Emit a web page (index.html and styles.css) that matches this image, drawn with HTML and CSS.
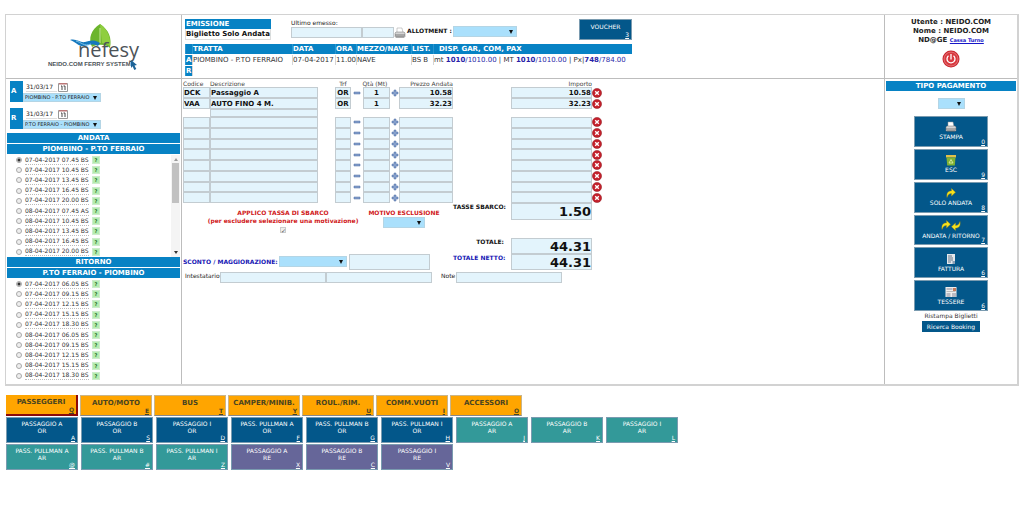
FILE: index.html
```html
<!DOCTYPE html>
<html lang="it">
<head>
<meta charset="utf-8">
<title>Nefesy - Emissione</title>
<link rel="stylesheet" href="styles.css">
</head>
<body>
<svg class="defs" aria-hidden="true">
  <symbol id="printer" viewBox="0 0 12 12"><path d="M3 1h5l1 5H3z" fill="#fff" stroke="#999" stroke-width=".5"/><path d="M1 6l1-1h8l1 1v4H1z" fill="#d4d4d4" stroke="#777" stroke-width=".5"/><path d="M1 8h10M2 10h8" stroke="#666" stroke-width=".8"/></symbol>
  <symbol id="del" viewBox="0 0 10 10"><circle cx="5" cy="5" r="4.6" fill="#c4202b" stroke="#8e1a20" stroke-width=".5"/><path d="M3.2 3.2l3.6 3.6M6.8 3.2L3.2 6.8" stroke="#fff" stroke-width="1.4"/></symbol>
  <symbol id="minus" viewBox="0 0 8 8"><path d="M1 3h6v2H1z" fill="#86a0cc" stroke="#4a68a0" stroke-width=".5"/></symbol>
  <symbol id="plus" viewBox="0 0 8 8"><path d="M3 1h2v2h2v2H5v2H3V5H1V3h2z" fill="#86a0cc" stroke="#4a68a0" stroke-width=".5"/></symbol>
  <symbol id="cal" viewBox="0 0 10 10"><path d="M.5 1.5h9v8h-9z" fill="#fff" stroke="#999"/><path d="M1 1h8v1.5H1z" fill="#b77"/><path d="M3 4h1v4M5.500 4h1.500v4" fill="none" stroke="#333" stroke-width=".9"/></symbol>
  <symbol id="arrow" viewBox="0 0 10 10"><path d="M1 9.500C.3 5 2 2.800 5.500 3V.5L9.500 4.300 5.500 8V5.500C3.500 5.300 2 6.500 1 9.500z" fill="#f7e21d" stroke="#a38b10" stroke-width=".4"/></symbol>
</svg>

<main class="shell">
  <header class="cell logo">
    <svg class="logo-art" viewBox="0 0 100 50" role="img" aria-label="nefesy">
      <path d="M54 1C45 7 42 15 46 24c5-3 14-3 18 1 2-10-1-18-10-24z" fill="#6cb52d"/>
      <path d="M54 1c8 6 11 14 10 22-3-2-6-3-8-3z" fill="#8fce3f"/>
      <path d="M54 5v15" stroke="#c9e89a" stroke-width="1"/>
      <path d="M24 17c6-2 10 3 15 2s8-3 15 1l-2 3c-6-3-9-1-14 0s-8-4-14-6z" fill="#1678bd"/>
      <path d="M30 18c5 1 8 6 15 3" fill="none" stroke="#7fc4ea" stroke-width="1"/>
      <text class="brand" x="32" y="34">nefesy</text>
      <text class="tagline" x="2" y="43">NEIDO.COM FERRY SYSTEM</text>
      <path d="M85 37l6 5-2.500.4 1.800 3.600-2 1-1.700-3.700-1.600 1.800z" fill="#1c6397"/>
    </svg>
  </header>

  <section class="cell booking">
    <div class="booking-bar">
      <div class="mode"><h1 class="bar">EMISSIONE</h1><strong class="mode-name">Biglietto Solo Andata</strong></div>
      <div class="last"><label class="small" for="last1">Ultimo emesso:</label>
        <div class="last-row"><input class="f last-a" id="last1"><input class="f last-b" aria-label="Numero emesso"></div></div>
      <button class="plain" aria-label="Stampa ultimo"><svg class="i12"><use href="#printer"/></svg></button>
      <label class="allot" for="allot">ALLOTMENT :</label>
      <span class="sel sel-allot"><select id="allot"><option></option></select></span>
      <button class="tile voucher">VOUCHER<u>3</u></button>
    </div>
    <table class="route">
      <thead><tr><th class="c-dir"></th><th class="c-tratta">TRATTA</th><th class="c-data">DATA</th><th class="c-ora">ORA</th><th class="c-nave">MEZZO/NAVE</th><th class="c-list">LIST.</th><th class="disp">DISP. GAR, COM, PAX</th></tr></thead>
      <tbody>
        <tr><th>A</th><td>PIOMBINO - P.TO FERRAIO</td><td>07-04-2017</td><td>11.00</td><td>NAVE</td><td>BS B</td><td class="avail">mt <span><b>1010</b>/1010.00</span> | MT <span><b>1010</b>/1010.00</span> | Px|<span><b>748</b>/784.00</span></td></tr>
        <tr><th>R</th><td colspan="6"></td></tr>
      </tbody>
    </table>
  </section>

  <aside class="cell user">
    <strong>Utente : NEIDO.COM</strong>
    <strong>Nome : NEIDO.COM</strong>
    <strong>ND@GE <a class="cassa" href="#">Cassa Turno</a></strong>
    <button class="plain power" aria-label="Esci"><svg class="i18" viewBox="0 0 18 18"><circle cx="9" cy="9" r="8.500" fill="#c9222b"/><circle cx="9" cy="9" r="7" fill="#d8393f" stroke="#f0a5a5" stroke-width=".6"/><path d="M6.500 5.800a4 4 0 1 0 5 0M9 4v5.500" fill="none" stroke="#fff" stroke-width="1.300"/></svg></button>
  </aside>

  <section class="cell trips">
    <div class="legs">
    <div class="leg"><b class="leg-tag">A</b><div class="leg-body">
      <div class="leg-date"><input class="date" aria-label="Data andata" value="31/03/17"><button class="plain" aria-label="Calendario andata"><svg class="i10"><use href="#cal"/></svg></button></div>
      <span class="sel sel-leg"><select aria-label="Tratta andata"><option>PIOMBINO - P.TO FERRAIO</option></select></span></div></div>
    <div class="leg"><b class="leg-tag">R</b><div class="leg-body">
      <div class="leg-date"><input class="date" aria-label="Data ritorno" value="31/03/17"><button class="plain" aria-label="Calendario ritorno"><svg class="i10"><use href="#cal"/></svg></button></div>
      <span class="sel sel-leg"><select aria-label="Tratta ritorno"><option>P.TO FERRAIO - PIOMBINO</option></select></span></div></div>
    </div>

    <h2 class="bar center">ANDATA</h2>
    <h3 class="bar center">PIOMBINO - P.TO FERRAIO</h3>
    <div class="scroll">
      <div class="times">
        <div class="time"><label><input type="radio" name="out" checked><span>07-04-2017 07.45 BS</span></label><button class="q">?</button></div>
        <div class="time"><label><input type="radio" name="out"><span>07-04-2017 10.45 BS</span></label><button class="q">?</button></div>
        <div class="time"><label><input type="radio" name="out"><span>07-04-2017 13.45 BS</span></label><button class="q">?</button></div>
        <div class="time"><label><input type="radio" name="out"><span>07-04-2017 16.45 BS</span></label><button class="q">?</button></div>
        <div class="time"><label><input type="radio" name="out"><span>07-04-2017 20.00 BS</span></label><button class="q">?</button></div>
        <div class="time"><label><input type="radio" name="out"><span>08-04-2017 07.45 AS</span></label><button class="q">?</button></div>
        <div class="time"><label><input type="radio" name="out"><span>08-04-2017 10.45 BS</span></label><button class="q">?</button></div>
        <div class="time"><label><input type="radio" name="out"><span>08-04-2017 13.45 BS</span></label><button class="q">?</button></div>
        <div class="time"><label><input type="radio" name="out"><span>08-04-2017 16.45 BS</span></label><button class="q">?</button></div>
        <div class="time"><label><input type="radio" name="out"><span>08-04-2017 20.00 BS</span></label><button class="q">?</button></div>
      </div>
      <div class="track"><i class="up"></i><i class="thumb"></i><i class="down"></i></div>
    </div>
    <h2 class="bar center">RITORNO</h2>
    <h3 class="bar center">P.TO FERRAIO - PIOMBINO</h3>
    <div class="times">
      <div class="time"><label><input type="radio" name="back" checked><span>07-04-2017 06.05 BS</span></label><button class="q">?</button></div>
      <div class="time"><label><input type="radio" name="back"><span>07-04-2017 09.15 BS</span></label><button class="q">?</button></div>
      <div class="time"><label><input type="radio" name="back"><span>07-04-2017 12.15 BS</span></label><button class="q">?</button></div>
      <div class="time"><label><input type="radio" name="back"><span>07-04-2017 15.15 BS</span></label><button class="q">?</button></div>
      <div class="time"><label><input type="radio" name="back"><span>07-04-2017 18.30 BS</span></label><button class="q">?</button></div>
      <div class="time"><label><input type="radio" name="back"><span>08-04-2017 06.05 BS</span></label><button class="q">?</button></div>
      <div class="time"><label><input type="radio" name="back"><span>08-04-2017 09.15 BS</span></label><button class="q">?</button></div>
      <div class="time"><label><input type="radio" name="back"><span>08-04-2017 12.15 BS</span></label><button class="q">?</button></div>
      <div class="time"><label><input type="radio" name="back"><span>08-04-2017 15.15 BS</span></label><button class="q">?</button></div>
      <div class="time"><label><input type="radio" name="back"><span>08-04-2017 18.30 BS</span></label><button class="q">?</button></div>
    </div>
  </section>

  <section class="cell items">
    <table class="lines">
      <thead><tr class="line"><th>Codice</th><th>Descrizione</th><th></th><th class="ctr">Trf</th><th class="ctr wide">Qtà (Mt)</th><th class="num">Prezzo Andata</th><th></th><th class="num">Importo</th><th></th></tr></thead>
      <tbody class="filled">
        <tr class="line"><td><input class="f" aria-label="Codice" value="DCK"></td><td><input class="f" aria-label="Descrizione" value="Passaggio A"></td><td></td><td><input class="f ctr" aria-label="Trf" value="OR"></td><td><button class="plain" aria-label="Meno"><svg class="i8"><use href="#minus"/></svg></button></td><td><input class="f ctr" aria-label="Qtà" value="1"></td><td><button class="plain" aria-label="Più"><svg class="i8"><use href="#plus"/></svg></button></td><td><input class="f num" aria-label="Prezzo" value="10.58"></td><td></td><td><input class="f num" aria-label="Importo" value="10.58"></td><td><button class="plain" aria-label="Elimina"><svg class="i10"><use href="#del"/></svg></button></td></tr>
        <tr class="line"><td><input class="f" aria-label="Codice" value="VAA"></td><td><input class="f" aria-label="Descrizione" value="AUTO FINO 4 M."></td><td></td><td><input class="f ctr" aria-label="Trf" value="OR"></td><td></td><td><input class="f ctr" aria-label="Qtà" value="1"></td><td></td><td><input class="f num" aria-label="Prezzo" value="32.23"></td><td></td><td><input class="f num" aria-label="Importo" value="32.23"></td><td><button class="plain" aria-label="Elimina"><svg class="i10"><use href="#del"/></svg></button></td></tr>
        <tr class="line extra"><td></td><td><input class="f" aria-label="Targa"></td></tr>
      </tbody>
      <tbody class="empty">
        <tr class="line"><td><input class="f" aria-label="Codice"></td><td><input class="f" aria-label="Descrizione"></td><td></td><td><input class="f" aria-label="Trf"></td><td><button class="plain" aria-label="Meno"><svg class="i8"><use href="#minus"/></svg></button></td><td><input class="f" aria-label="Qtà"></td><td><button class="plain" aria-label="Più"><svg class="i8"><use href="#plus"/></svg></button></td><td><input class="f" aria-label="Prezzo"></td><td></td><td><input class="f" aria-label="Importo"></td><td><button class="plain" aria-label="Elimina"><svg class="i10"><use href="#del"/></svg></button></td></tr>
        <tr class="line"><td><input class="f" aria-label="Codice"></td><td><input class="f" aria-label="Descrizione"></td><td></td><td><input class="f" aria-label="Trf"></td><td><button class="plain" aria-label="Meno"><svg class="i8"><use href="#minus"/></svg></button></td><td><input class="f" aria-label="Qtà"></td><td><button class="plain" aria-label="Più"><svg class="i8"><use href="#plus"/></svg></button></td><td><input class="f" aria-label="Prezzo"></td><td></td><td><input class="f" aria-label="Importo"></td><td><button class="plain" aria-label="Elimina"><svg class="i10"><use href="#del"/></svg></button></td></tr>
        <tr class="line"><td><input class="f" aria-label="Codice"></td><td><input class="f" aria-label="Descrizione"></td><td></td><td><input class="f" aria-label="Trf"></td><td><button class="plain" aria-label="Meno"><svg class="i8"><use href="#minus"/></svg></button></td><td><input class="f" aria-label="Qtà"></td><td><button class="plain" aria-label="Più"><svg class="i8"><use href="#plus"/></svg></button></td><td><input class="f" aria-label="Prezzo"></td><td></td><td><input class="f" aria-label="Importo"></td><td><button class="plain" aria-label="Elimina"><svg class="i10"><use href="#del"/></svg></button></td></tr>
        <tr class="line"><td><input class="f" aria-label="Codice"></td><td><input class="f" aria-label="Descrizione"></td><td></td><td><input class="f" aria-label="Trf"></td><td><button class="plain" aria-label="Meno"><svg class="i8"><use href="#minus"/></svg></button></td><td><input class="f" aria-label="Qtà"></td><td><button class="plain" aria-label="Più"><svg class="i8"><use href="#plus"/></svg></button></td><td><input class="f" aria-label="Prezzo"></td><td></td><td><input class="f" aria-label="Importo"></td><td><button class="plain" aria-label="Elimina"><svg class="i10"><use href="#del"/></svg></button></td></tr>
        <tr class="line"><td><input class="f" aria-label="Codice"></td><td><input class="f" aria-label="Descrizione"></td><td></td><td><input class="f" aria-label="Trf"></td><td><button class="plain" aria-label="Meno"><svg class="i8"><use href="#minus"/></svg></button></td><td><input class="f" aria-label="Qtà"></td><td><button class="plain" aria-label="Più"><svg class="i8"><use href="#plus"/></svg></button></td><td><input class="f" aria-label="Prezzo"></td><td></td><td><input class="f" aria-label="Importo"></td><td><button class="plain" aria-label="Elimina"><svg class="i10"><use href="#del"/></svg></button></td></tr>
        <tr class="line"><td><input class="f" aria-label="Codice"></td><td><input class="f" aria-label="Descrizione"></td><td></td><td><input class="f" aria-label="Trf"></td><td><button class="plain" aria-label="Meno"><svg class="i8"><use href="#minus"/></svg></button></td><td><input class="f" aria-label="Qtà"></td><td><button class="plain" aria-label="Più"><svg class="i8"><use href="#plus"/></svg></button></td><td><input class="f" aria-label="Prezzo"></td><td></td><td><input class="f" aria-label="Importo"></td><td><button class="plain" aria-label="Elimina"><svg class="i10"><use href="#del"/></svg></button></td></tr>
        <tr class="line"><td><input class="f" aria-label="Codice"></td><td><input class="f" aria-label="Descrizione"></td><td></td><td><input class="f" aria-label="Trf"></td><td><button class="plain" aria-label="Meno"><svg class="i8"><use href="#minus"/></svg></button></td><td><input class="f" aria-label="Qtà"></td><td><button class="plain" aria-label="Più"><svg class="i8"><use href="#plus"/></svg></button></td><td><input class="f" aria-label="Prezzo"></td><td></td><td><input class="f" aria-label="Importo"></td><td><button class="plain" aria-label="Elimina"><svg class="i10"><use href="#del"/></svg></button></td></tr>
        <tr class="line"><td><input class="f" aria-label="Codice"></td><td><input class="f" aria-label="Descrizione"></td><td></td><td><input class="f" aria-label="Trf"></td><td><button class="plain" aria-label="Meno"><svg class="i8"><use href="#minus"/></svg></button></td><td><input class="f" aria-label="Qtà"></td><td><button class="plain" aria-label="Più"><svg class="i8"><use href="#plus"/></svg></button></td><td><input class="f" aria-label="Prezzo"></td><td></td><td><input class="f" aria-label="Importo"></td><td><button class="plain" aria-label="Elimina"><svg class="i10"><use href="#del"/></svg></button></td></tr>
      </tbody>
    </table>

    <div class="sums taxes">
      <div class="tax"><label for="tax">APPLICO TASSA DI SBARCO<br>(per escludere selezionare una motivazione)</label><input type="checkbox" id="tax" checked disabled></div>
      <div class="tax"><label for="motivo">MOTIVO ESCLUSIONE</label><span class="sel sel-mot"><select id="motivo"><option></option></select></span></div>
      <label class="sum-label" for="sbarco">TASSE SBARCO:</label><input class="f big" id="sbarco" value="1.50">
    </div>
    <div class="sums totals">
      <div class="discount"><label for="sconto">SCONTO / MAGGIORAZIONE:</label><span class="sel sel-sconto"><select id="sconto"><option></option></select></span><input class="f disc-val" aria-label="Valore sconto"></div>
      <label class="sum-label" for="tot">TOTALE:</label><input class="f big" id="tot" value="44.31">
      <label class="sum-label net" for="netto">TOTALE NETTO:</label><input class="f big" id="netto" value="44.31">
    </div>
    <div class="holder">
      <label class="small" for="int">Intestatario</label><input class="f" id="int"><input class="f" aria-label="Nome"><label class="small note" for="note">Note</label><input class="f" id="note">
    </div>
  </section>

  <aside class="cell pay">
    <h2 class="bar center">TIPO PAGAMENTO</h2>
    <span class="sel sel-pay"><select aria-label="Tipo pagamento"><option></option></select></span>
    <div class="actions">
      <button class="tile"><svg class="i12"><use href="#printer"/></svg>STAMPA<u>0</u></button>
      <button class="tile"><svg class="i12" viewBox="0 0 12 12"><path d="M1 1h10v2.500H1z" fill="#e2c04a"/><path d="M1.500 3.500h9l-.7 8H2.200z" fill="#7fb234"/><path d="M4 9l2-3.500L8 9z" fill="none" stroke="#e3f3b5" stroke-width=".8"/></svg>ESC<u>9</u></button>
      <button class="tile"><svg class="i12"><use href="#arrow" x="1" y="1" width="10" height="10"/></svg>SOLO ANDATA<u>8</u></button>
      <button class="tile"><svg class="pair" viewBox="0 0 20 12"><use href="#arrow" width="10" height="10" x="0" y="0"/><use href="#arrow" width="10" height="10" transform="rotate(180 10 5.500)"/></svg>ANDATA / RITORNO<u>7</u></button>
      <button class="tile"><svg class="i12" viewBox="0 0 12 12"><path d="M2 1h8v10H2z" fill="#e4e8ec"/><path d="M3 3h4M3 5h5M3 7h5M3 9h3" stroke="#66788a"/><path d="M7.500 8h2.500v3H7.500z" fill="#8ba0b5"/></svg>FATTURA<u>6</u></button>
      <button class="tile"><svg class="i12" viewBox="0 0 12 12"><path d="M.5 1h11v10H.5z" fill="#eee"/><path d="M1.500 3h6M1.500 8h4M1.500 10h4M7 8h4M7 10h4" stroke="#889"/><path d="M8 2h3v3H8z" fill="#c67a5c"/><path d="M1.500 5.500h9" stroke="#bbb"/></svg>TESSERE<u>6</u></button>
    </div>
    <a class="reprint" href="#">Ristampa Biglietti</a>
    <button class="search">Ricerca Booking</button>
  </aside>
</main>

<nav class="tabs">
  <button class="tab on">PASSEGGERI<u>Q</u></button>
  <button class="tab">AUTO/MOTO<u>E</u></button>
  <button class="tab">BUS<u>T</u></button>
  <button class="tab">CAMPER/MINIB.<u>Y</u></button>
  <button class="tab">ROUL./RIM.<u>U</u></button>
  <button class="tab">COMM.VUOTI<u>I</u></button>
  <button class="tab">ACCESSORI<u>O</u></button>
</nav>
<section class="fares">
  <button class="tile fare">PASSAGGIO A<br>OR<u>A</u></button>
  <button class="tile fare">PASSAGGIO B<br>OR<u>S</u></button>
  <button class="tile fare">PASSAGGIO I<br>OR<u>D</u></button>
  <button class="tile fare">PASS. PULLMAN A<br>OR<u>F</u></button>
  <button class="tile fare">PASS. PULLMAN B<br>OR<u>G</u></button>
  <button class="tile fare">PASS. PULLMAN I<br>OR<u>H</u></button>
  <button class="tile fare ar">PASSAGGIO A<br>AR<u>J</u></button>
  <button class="tile fare ar">PASSAGGIO B<br>AR<u>K</u></button>
  <button class="tile fare ar">PASSAGGIO I<br>AR<u>L</u></button>
  <button class="tile fare ar">PASS. PULLMAN A<br>AR<u>@</u></button>
  <button class="tile fare ar">PASS. PULLMAN B<br>AR<u>#</u></button>
  <button class="tile fare ar">PASS. PULLMAN I<br>AR<u>Z</u></button>
  <button class="tile fare re">PASSAGGIO A<br>RE<u>X</u></button>
  <button class="tile fare re">PASSAGGIO B<br>RE<u>C</u></button>
  <button class="tile fare re">PASSAGGIO I<br>RE<u>V</u></button>
</section>
</body>
</html>
```
FILE: styles.css
```css
* { box-sizing: border-box; }
body { margin: 0; padding: 14px 5px 0; background: #fff; color: #222; font: 6px/8px "DejaVu Sans", Verdana, sans-serif; }
button, input, select { font: inherit; color: inherit; margin: 0; padding: 0; border-radius: 0; }
button { cursor: pointer; }
h1, h2, h3 { margin: 0; }
svg { display: block; flex: none; }
.defs { position: absolute; width: 0; height: 0; }
.i8 { width: 8px; height: 8px; }
.i10 { width: 10px; height: 10px; }
.i12 { width: 12px; height: 12px; }
.i18 { width: 18px; height: 18px; }
.pair { width: 20px; height: 12px; }
.plain { display: block; border: 0; background: none; }
.bar { background: #0782c4; color: #fff; font-size: 7px; line-height: 10px; font-weight: bold; padding: 0 1px; }
.center { text-align: center; }
.small { font-size: 6px; line-height: 7px; }

/* Frame */
.shell { display: grid; grid-template-columns: 175px 1fr 132px; grid-template-rows: auto 1fr; border: 2px solid #d2d2d2; border-left-width: 1px; border-top-width: 1px; }
.cell { border: 0 solid #bdbdbd; min-width: 0; }
.logo, .booking, .user { border-bottom-width: 1px; }
.booking, .items { border-left-width: 1px; border-right-width: 1px; }

/* Logo */
.logo { display: flex; justify-content: center; padding: 8px 0 4px; }
.logo-art { width: 100px; height: 50px; margin-left: 4px; }
.brand { font: 20px "Open Sans", sans-serif; fill: #4c5358; }
.tagline { font: bold 6px "Liberation Sans", sans-serif; fill: #4c5358; }

/* Form fields */
.f { display: block; width: 100%; min-width: 0; height: 100%; border: 1px solid #c3ccd1; background: #e3f4fc; font-size: 7px; font-weight: bold; color: #111; }
.num { text-align: right; }
.ctr { text-align: center; }
.sel { display: block; position: relative; background: #aae0fc; border: 1px solid #b4d5e5; }
.sel::after { content: ""; position: absolute; right: 3px; top: 50%; margin-top: -2px; border: 2px solid transparent; border-top: 4px solid #111; border-bottom: 0; pointer-events: none; }
.sel select { display: block; width: 100%; height: 100%; appearance: none; border: 0; background: none; }

/* Booking header */
.booking { padding: 4px 3px 1px; }
.booking-bar { display: flex; width: 447px; max-width: 100%; height: 21px; }
.mode { width: 86px; margin-right: 20px; }
.mode-name { display: block; font-size: 7px; line-height: 10px; border: 1px solid #ddd; border-top: 0; white-space: nowrap; color: #111; }
.last { width: 103px; }
.last-row { display: flex; height: 11px; }
.last-a { width: 71px; }
.last-b { width: 32px; }
.booking-bar > .plain, .allot { margin-top: 7px; }
.allot { font-weight: bold; margin-left: 1px; padding-top: 1px; width: 46px; white-space: nowrap; color: #111; }
.sel-allot { width: 64px; height: 11px; margin-top: 7px; }
.route { width: 447px; max-width: 100%; margin-top: 3px; border-collapse: separate; border-spacing: 0 1px; table-layout: fixed; font-size: 7px; line-height: 10px; }
.route th, .route td { padding: 0; height: 10px; white-space: nowrap; }
.route th { background: #0782c4; color: #fff; text-align: left; border-left: 1px solid #2a95cf; }
.route td { border-left: 1px solid #d5d5d5; color: #333; }
.c-dir { width: 7px; }
.c-tratta { width: 100px; }
.c-data { width: 43px; }
.c-ora { width: 21px; }
.c-nave { width: 55px; }
.c-list { width: 22px; }
.route .disp { padding-left: 5px; }
.avail span { color: #2a1fa8; }

/* Tiles */
.tile { position: relative; display: flex; flex-direction: column; align-items: center; justify-content: center; background: #03578a; color: #fff; border: 1px solid #7a9bb0; font-size: 6px; line-height: 8px; }
.tile u, .tab u { position: absolute; right: 2px; bottom: 1px; font-size: 6px; line-height: 7px; }
.voucher { width: 53px; margin-left: auto; justify-content: flex-start; padding-top: 3px; }

/* User */
.user { display: flex; flex-direction: column; align-items: center; padding-top: 3px; font-size: 7px; line-height: 9px; color: #222; }
.cassa { font-size: 5px; color: #1616c8; }
.power { margin-top: 5px; }

/* Trips */
.trips { padding: 2px 1px 3px; }
.legs { display: grid; gap: 6px; padding: 0 3px 4px; }
.leg { display: flex; height: 21px; }
.leg-tag { width: 13px; background: #0782c4; color: #fff; line-height: 21px; font-size: 7px; padding-left: 1px; }
.leg-date { display: flex; height: 12px; padding: 1px 0 1px 3px; gap: 1px; }
.date { width: 31px; border: 0; border-bottom: 1px solid #ddd; background: none; font-size: 6px; }
.sel-leg { width: 78px; height: 9px; font-size: 5px; line-height: 7px; padding-left: 1px; }
.trips .bar { margin-bottom: 1px; }
.scroll { display: flex; justify-content: space-between; }
.times { display: grid; grid-auto-rows: 1fr; height: 102px; padding-left: 9px; }
.time { display: flex; align-items: center; }
.time label { display: flex; align-items: center; gap: 3px; width: 76px; color: #333; white-space: nowrap; }
.time span { border-bottom: 1px dotted #bbb; }
.time input { appearance: none; width: 6px; height: 6px; border: 1px solid #aaa; border-radius: 50%; background: #eee; }
.time input:checked { background: radial-gradient(#333 0 1px, #ddd 2px); }
.q { width: 8px; height: 8px; border: 1px solid #cdeccb; background: #b4ecb0; color: #276b24; font-size: 5px; line-height: 6px; font-weight: bold; }
.track { width: 9px; background: #f4f4f4; display: flex; flex-direction: column; align-items: center; }
.up, .down { border: 2px solid transparent; margin: 3px 0 2px; }
.up { border-bottom: 3px solid #999; border-top: 0; }
.down { border-top: 3px solid #333; border-bottom: 0; margin: auto 0 3px; }
.thumb { width: 7px; height: 40px; background: #c1c1c1; }

/* Item lines */
.items { padding: 1px 1px 0; }
.lines { display: block; }
.line { display: grid; grid-template-columns: 27px 108px 17px 16px 12px 27px 9px 54px 58px 81px 10px; }
.lines thead, .filled { display: block; }
.lines th { font-size: 6px; line-height: 7px; font-weight: normal; padding: 0; text-align: left; color: #444; white-space: nowrap; }
.lines th.ctr { text-align: center; }
.lines th.num { text-align: right; }
.wide { grid-column: 5 / 8; }
.lines td { padding: 0; display: flex; align-items: center; justify-content: center; min-height: 0; }
.filled .line { height: 11px; }
.filled .extra { height: 8px; }
.empty { display: grid; grid-auto-rows: 1fr; height: 86px; }
.empty .line { min-height: 0; grid-template-rows: 100%; }

/* Totals */
.sums { display: grid; grid-template-columns: 172px 98px 58px 81px; font-weight: bold; color: #111; }
.taxes { height: 35px; align-items: start; }
.tax { display: flex; flex-direction: column; align-items: center; padding-top: 6px; color: #d01820; text-align: center; white-space: nowrap; }
.tax:first-child { margin-left: 28px; }
.tax input { appearance: none; width: 6px; height: 6px; margin-top: 2px; border: 1px solid #ccc; background: #eee; display: grid; place-items: center; }
.tax input::after { content: "✓"; font-size: 6px; line-height: 6px; color: #555; }
.sel-mot { width: 42px; height: 11px; }
.big { height: 17px; font-size: 13px; line-height: 15px; text-align: right; }
.totals .big { height: 16px; line-height: 14px; }
.sum-label { text-align: right; padding-right: 7px; white-space: nowrap; }
.net, .discount { color: #1616b4; }
.discount { grid-column: 1 / 3; grid-row: 1 / 3; display: flex; align-items: flex-end; height: 32px; }
.discount label { width: 96px; line-height: 16px; white-space: nowrap; }
.sel-sconto { width: 68px; height: 11px; margin: 0 2px 3px 0; }
.disc-val { width: 81px; height: 16px; }
.holder { display: flex; height: 11px; margin-top: 2px; padding-left: 2px; }
.holder .f { flex: none; width: 106px; }
.holder .small { flex: none; width: 35px; }
.holder .note { width: 15px; margin-left: 9px; }

/* Payment */
.pay { display: flex; flex-direction: column; align-items: center; padding: 2px 1px; }
.pay .bar { align-self: stretch; }
.sel-pay { width: 27px; height: 11px; margin: 7px 0; }
.actions { display: grid; grid-auto-rows: 1fr; gap: 2px; width: 74px; height: 195px; }
.actions .tile { min-height: 0; }
.reprint { color: #333; text-decoration: none; margin-top: 1px; }
.search { margin-top: 1px; width: 58px; height: 11px; border: 0; background: #03578a; color: #fff; font-size: 6px; white-space: nowrap; }

/* Tabs and fares */
.tabs { display: flex; gap: 2px; margin: 9px 0 0 1px; }
.tab { position: relative; width: 72px; height: 21px; background: #ffa500; border: 1px solid #c9b58a; border-bottom-color: #888; color: #4a4420; font-weight: bold; font-size: 7px; line-height: 8px; padding-bottom: 5px; white-space: nowrap; }
.tab.on { border: 0 solid #8b0a0a; border-width: 0 2px 2px 0; }
.fares { display: grid; grid-template-columns: repeat(9, 72px); gap: 1px 3px; margin: 1px 0 0 1px; }
.fare { display: block; height: 26px; line-height: 7px; padding-bottom: 7px; text-align: center; white-space: nowrap; }
.ar { background: #339999; }
.re { background: #666699; }
```
